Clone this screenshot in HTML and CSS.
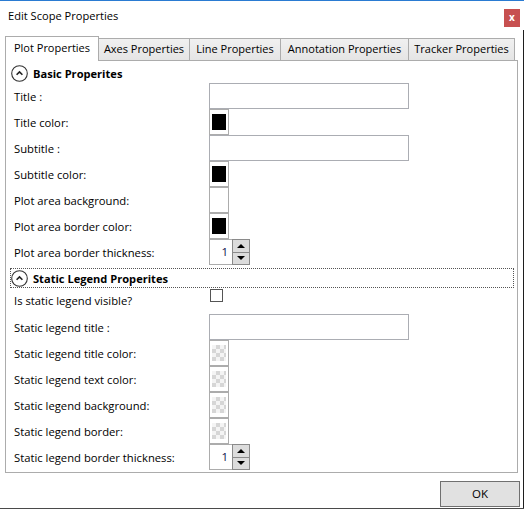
FILE: index.html
```html
<!DOCTYPE html>
<html>
<head>
<meta charset="utf-8">
<title>Edit Scope Properties</title>
<link rel="stylesheet" href="styles.css">
</head>
<body>
<div class="window">
  <div class="titlebar">
    <span class="title">Edit Scope Properties</span>
    <div class="close">x</div>
  </div>
  <div class="main">
    <div class="tabs">
      <div class="tab active t-plot">Plot Properties</div>
      <div class="tab t-axes">Axes Properties</div>
      <div class="tab t-line">Line Properties</div>
      <div class="tab t-annot">Annotation Properties</div>
      <div class="tab t-track">Tracker Properties</div>
    </div>
    <div class="panel">
      <div class="exp-header basic">
        <svg class="exp-icon" width="17" height="17" viewBox="0 0 17 17"><circle cx="8.5" cy="8.5" r="7.8" fill="none" stroke="#333" stroke-width="1.1"/><path d="M5.6 9.8 L8.5 6.9 L11.4 9.8" fill="none" stroke="#222" stroke-width="1.6"/></svg>
        <span>Basic Properites</span>
      </div>
      <div class="rows">
        <div class="row"><span class="label">Title :</span><div class="textbox"></div></div>
        <div class="row"><span class="label">Title color:</span><div class="colorbox"><div class="swatch black"></div></div></div>
        <div class="row"><span class="label">Subtitle :</span><div class="textbox"></div></div>
        <div class="row"><span class="label">Subtitle color:</span><div class="colorbox"><div class="swatch black"></div></div></div>
        <div class="row"><span class="label">Plot area background:</span><div class="colorbox"><div class="swatch white"></div></div></div>
        <div class="row"><span class="label">Plot area border color:</span><div class="colorbox"><div class="swatch black"></div></div></div>
        <div class="row"><span class="label">Plot area border thickness:</span>
          <div class="spinner"><div class="spin-text">1</div><div class="spin-btns"><div class="spin-btn"><span class="arrow-up"></span></div><div class="spin-btn"><span class="arrow-down"></span></div></div></div>
        </div>
      </div>
      <div class="exp-header focused">
        <svg class="exp-icon" width="17" height="17" viewBox="0 0 17 17"><circle cx="8.5" cy="8.5" r="7.8" fill="none" stroke="#333" stroke-width="1.1"/><path d="M5.6 9.8 L8.5 6.9 L11.4 9.8" fill="none" stroke="#222" stroke-width="1.6"/></svg>
        <span>Static Legend Properites</span>
      </div>
      <div class="rows">
        <div class="row top"><span class="label">Is static legend visible?</span><div class="checkbox"></div></div>
        <div class="row"><span class="label">Static legend title :</span><div class="textbox"></div></div>
        <div class="row"><span class="label">Static legend title color:</span><div class="colorbox"><div class="swatch checker"></div></div></div>
        <div class="row"><span class="label">Static legend text color:</span><div class="colorbox"><div class="swatch checker"></div></div></div>
        <div class="row"><span class="label">Static legend background:</span><div class="colorbox"><div class="swatch checker"></div></div></div>
        <div class="row"><span class="label">Static legend border:</span><div class="colorbox"><div class="swatch checker"></div></div></div>
        <div class="row"><span class="label">Static legend border thickness:</span>
          <div class="spinner"><div class="spin-text">1</div><div class="spin-btns"><div class="spin-btn"><span class="arrow-up"></span></div><div class="spin-btn"><span class="arrow-down"></span></div></div></div>
        </div>
      </div>
    </div>
    <div class="footer">
      <div class="ok">OK</div>
    </div>
  </div>
</div>
</body>
</html>
```

FILE: styles.css
```css
* { box-sizing: border-box; }
html, body { margin: 0; padding: 0; background: #fff; }
body {
  font-family: "Open Sans", "Noto Sans", sans-serif;
  font-size: 11px;
  color: #000;
}
.window {
  width: 524px;
  height: 509px;
  border-top: 1px solid #2a7bd2;
  border-bottom: 1px solid #4a4a4a;
  display: flex;
  flex-direction: column;
  background: #fff;
}
.titlebar {
  height: 29px;
  display: flex;
  justify-content: space-between;
  align-items: flex-start;
  flex: none;
}
.title {
  padding: 7px 0 0 8px;
  font-size: 11.1px;
  line-height: 16px;
}
.close {
  margin: 8px 4px 0 0;
  width: 16px;
  height: 18px;
  background: #c75050;
  color: #fff;
  font-weight: bold;
  font-size: 10px;
  line-height: 17px;
  text-align: center;
}
.main {
  flex: 1;
  border-right: 1px solid #1e1e1e;
  padding: 6px 5px 0 5px;
  display: flex;
  flex-direction: column;
}
.tabs {
  height: 24px;
  display: flex;
  align-items: flex-end;
  flex: none;
  position: relative;
  z-index: 1;
}
.tab {
  height: 22px;
  border: 1px solid #acacac;
  border-bottom: none;
  background: linear-gradient(#f0f0f0, #e5e5e5);
  margin-left: -1px;
  text-align: center;
  line-height: 20px;
  white-space: nowrap;
}
.tab.active {
  height: 25px;
  margin-left: 0;
  margin-bottom: -1px;
  background: #fff;
  line-height: 22px;
}
.t-plot { width: 94px; }
.t-axes { width: 92px; }
.t-line { width: 92px; }
.t-annot { width: 129px; }
.t-track { width: 107px; }
.panel {
  height: 413px;
  flex: none;
  border: 1px solid #acacac;
  background: #fff;
}
.exp-header {
  height: 20px;
  margin: 2px 3px 0 4px;
  border: 1px solid transparent;
  display: flex;
  align-items: center;
  font-weight: bold;
  font-size: 11.1px;
}
.exp-header.focused {
  margin-top: 3px;
  border: 1px dotted #555;
}
.exp-icon {
  flex: none;
  margin-right: 5px;
}
.rows {
  display: flex;
  flex-direction: column;
}
.row {
  height: 26px;
  padding-left: 8px;
  display: grid;
  grid-template-columns: 195px auto;
  align-items: center;
  font-size: 11.25px;
}
.row.top { align-items: start; }
.row.top .label { line-height: 26px; }
.textbox {
  width: 200px;
  height: 26px;
  border: 1px solid #abadb3;
}
.colorbox {
  width: 20px;
  height: 26px;
  border: 1px solid #acacac;
  padding: 4px 0 0 2px;
}
.swatch {
  width: 14px;
  height: 16px;
}
.swatch.black { background: #000; }
.swatch.white { background: #fff; }
.swatch.checker {
  background: repeating-conic-gradient(#d6d6d6 0 25%, #f4f4f4 0 50%) 0 0 / 8px 8px;
}
.checkbox {
  width: 13px;
  height: 13px;
  border: 1px solid #555;
  margin: 1px 0 0 1px;
}
.spinner {
  width: 41px;
  height: 26px;
  display: flex;
}
.spin-text {
  width: 23px;
  height: 26px;
  border: 1px solid #acacac;
  border-right: none;
  text-align: right;
  padding-right: 4px;
  line-height: 24px;
  font-size: 11.5px;
  color: #10104a;
}
.spin-btns {
  width: 18px;
  display: flex;
  flex-direction: column;
}
.spin-btn {
  flex: 1;
  background: #dcdcdc;
  border: 1px solid #8a8a8a;
  display: flex;
  align-items: center;
  justify-content: center;
}
.spin-btn + .spin-btn { border-top: none; }
.arrow-up {
  width: 0; height: 0;
  border-left: 4px solid transparent;
  border-right: 4px solid transparent;
  border-bottom: 4px solid #000;
}
.arrow-down {
  width: 0; height: 0;
  border-left: 4px solid transparent;
  border-right: 4px solid transparent;
  border-top: 4px solid #000;
}
.footer {
  display: flex;
  justify-content: flex-end;
  margin: 8px -2px 0 0;
}
.ok {
  width: 80px;
  height: 26px;
  background: #e1e1e1;
  border: 1px solid #707070;
  text-align: center;
  line-height: 24px;
  font-size: 11.5px;
}
```
